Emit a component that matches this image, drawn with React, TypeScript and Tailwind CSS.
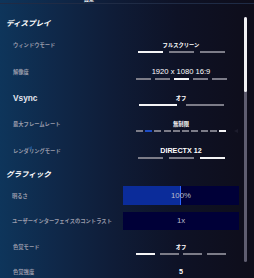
import React from "react"

type BarRowProps = {
  label: string
  value: string
  bars: number
  active: number
  barW: string
  gap: string
  big?: boolean
  valueClass?: string
  height: string
  extra?: Record<number, string>
}

const font = { fontFamily: '"Liberation Sans", "Noto Sans CJK JP", sans-serif' }

const BarRow = ({ label, value, bars, active, barW, gap, big, valueClass, height, extra }: BarRowProps) => {
  return (
    <div className={`flex ${height}`}>
      <div
        className={
          big
            ? "w-[123px] pl-[13px] text-[8.3px] leading-[8px] font-bold text-[#e4e6ee]"
            : "w-[123px] pl-[13px] text-[5.3px] leading-[8px] font-bold text-[#9a9cab]"
        }
      >
        {label}
      </div>
      <div className="w-[116px] flex flex-col items-center">
        <div className={valueClass ?? "text-[5.3px] leading-[8px] font-bold text-white"}>{value}</div>
        <div className={`flex mt-[2px] ${gap}`}>
          {Array.from({ length: bars }).map((_, i) => (
            <div
              key={i}
              className={`h-[2px] ${barW} ${
                i === active ? "bg-[#f4f4f6]" : extra && extra[i] ? extra[i] : "bg-[#7c7c88]"
              }`}
            />
          ))}
        </div>
      </div>
    </div>
  )
}

const SliderRow = ({ label, value, fill }: { label: string; value: string; fill?: boolean }) => {
  return (
    <div className="flex items-center h-full">
      <div className="w-[123px] pl-[12px] text-[5.3px] leading-[8px] font-bold text-[#9a9cab] whitespace-nowrap">
        {label}
      </div>
      <div className="w-[116px] h-full relative bg-[#000038] flex items-center justify-center">
        {fill && (
          <div className="absolute left-0 top-0 bottom-0 w-[58px] bg-[#0b2c9a] border-r border-[#2a63ff]" />
        )}
        <span className="relative text-[7.8px] text-[#b9bccb]">{value}</span>
      </div>
    </div>
  )
}

export default function App() {
  return (
    <div
      style={font}
      className="w-[254px] h-[278px] overflow-hidden relative bg-[linear-gradient(90deg,#0e355b_0%,#0f2849_22%,#0f1c37_45%,#0e1226_70%,#0e0d1a_100%)]"
    >
      {/* title, cut at the top */}
      <div className="h-[3px] overflow-hidden pl-[84px] border-b border-[#1f2b45] box-content">
        <div className="-mt-[4px] text-[5px] leading-[6px] font-bold text-white">設定</div>
      </div>

      <div className="flex">
        <div className="w-[241px] flex flex-col">
          <div className="mt-[14px] pl-[6px] h-[11px] text-[7.5px] leading-[11px] font-bold italic text-white">
            ディスプレイ
          </div>
          <div className="mt-[12px]">
            <BarRow label="ウィンドウモード" value="フルスクリーン" bars={3} active={0} barW="w-[25px]" gap="gap-[6px]" height="h-[27px]" />
            <BarRow
              label="解像度"
              value="1920 x 1080 16:9"
              bars={5}
              active={2}
              barW="w-[15px]"
              gap="gap-[4px]"
              valueClass="text-[7.6px] leading-[8px] text-white"
              height="h-[26px]"
            />
            <BarRow label="Vsync" value="オフ" bars={2} active={0} barW="w-[38px]" gap="gap-[9px]" big height="h-[26px]" />
            <BarRow
              label="最大フレームレート"
              value="無制限"
              bars={10}
              active={9}
              barW="w-[7px]"
              gap="gap-[2.3px]"
              height="h-[27px]"
              extra={{ 1: "bg-[#1d4cc4]" }}
            />
            <BarRow
              label="レンダリングモード"
              value="DIRECTX 12"
              bars={3}
              active={2}
              barW="w-[25px]"
              gap="gap-[6px]"
              valueClass="text-[7.2px] leading-[8px] font-bold text-white"
              height="h-[22px]"
            />
          </div>
          <div className="pl-[6px] h-[11px] text-[7.5px] leading-[11px] font-bold italic text-white">グラフィック</div>
          <div className="mt-[6px] h-[19px]">
            <SliderRow label="明るさ" value="100%" fill />
          </div>
          <div className="mt-[7px] h-[18px]">
            <SliderRow label="ユーザーインターフェイスのコントラスト" value="1x" />
          </div>
          <div className="mt-[13px]">
            <BarRow label="色覚モード" value="オフ" bars={4} active={0} barW="w-[19px]" gap="gap-[4.5px]" height="h-[25px]" />
            <div className="flex h-[10px]">
              <div className="w-[123px] pl-[13px] text-[5.3px] leading-[8px] font-bold text-[#9a9cab]">色覚強度</div>
              <div className="w-[116px] flex justify-center text-[7.2px] leading-[8px] font-bold text-white">5</div>
            </div>
          </div>
        </div>

        {/* scrollbar */}
        <div className="mt-[13px] ml-[3px] w-[3px] h-[245px] rounded-full bg-[#5f5d70] flex flex-col">
          <div className="h-[75px] rounded-full bg-[#f2f2f5]" />
        </div>
      </div>

      {/* faint carousel arrows */}
      <div className="absolute left-[28px] top-[146px] w-0 h-0 border-y-[2.5px] border-y-transparent border-r-[4px] border-r-[#1d4f8a]" />
      <div className="absolute left-[234px] top-[129px] w-0 h-0 border-y-[2.5px] border-y-transparent border-r-[4px] border-r-[#1c1c2c]" />
    </div>
  )
}
